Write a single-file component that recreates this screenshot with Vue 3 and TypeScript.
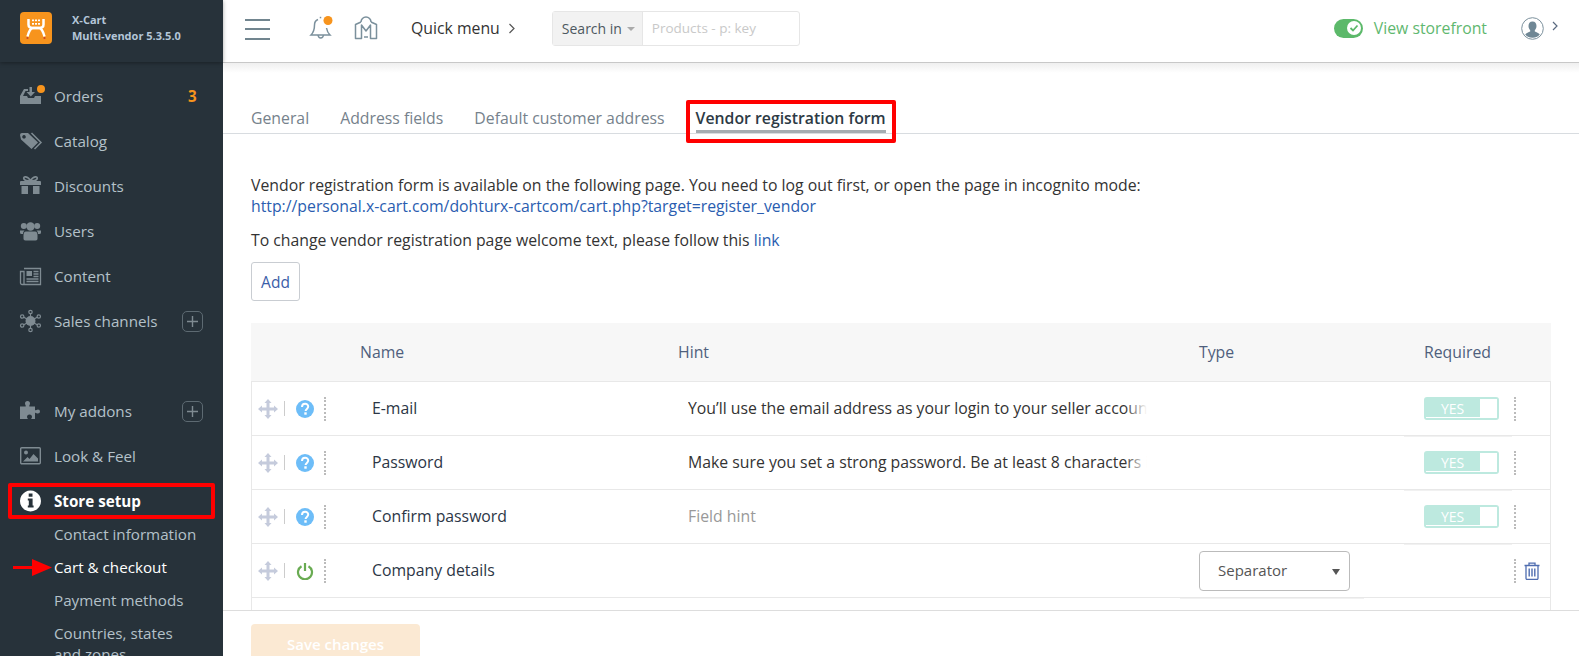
<script setup lang="ts">
interface NavItem {
  label: string
  icon: string
  plus?: boolean
  badge?: string
  gap?: boolean
}

const nav: NavItem[] = [
  { label: 'Orders', icon: 'orders', badge: '3' },
  { label: 'Catalog', icon: 'catalog' },
  { label: 'Discounts', icon: 'gift' },
  { label: 'Users', icon: 'users' },
  { label: 'Content', icon: 'content' },
  { label: 'Sales channels', icon: 'sales', plus: true },
  { label: 'My addons', icon: 'puzzle', plus: true, gap: true },
  { label: 'Look & Feel', icon: 'image' },
]

const subNav = ['Contact information', 'Cart & checkout', 'Payment methods']

interface Row {
  name: string
  hint: string
  placeholder?: boolean
  kind: 'required' | 'separator'
}

const rows: Row[] = [
  { name: 'E-mail', hint: 'You’ll use the email address as your login to your seller account', kind: 'required' },
  { name: 'Password', hint: 'Make sure you set a strong password. Be at least 8 characters in length', kind: 'required' },
  { name: 'Confirm password', hint: 'Field hint', placeholder: true, kind: 'required' },
  { name: 'Company details', hint: '', kind: 'separator' },
]

const tabs = ['General', 'Address fields', 'Default customer address', 'Vendor registration form']
</script>

<template>
  <div class="page">
    <aside class="side">
      <div class="brand">
        <div class="logo">
          <svg width="32" height="32" viewBox="0 0 32 32">
            <g fill="none" stroke="#fff" stroke-width="2.500">
              <path d="M8.500 7v5.500c0 3 2.500 3.500 4.500 3.500h6c2 0 4.500-.5 4.500-3.500V7" />
              <path d="M7.500 24.500c1.500-5.500 3-8.500 5.500-8.500h6c2.500 0 4 3 5.500 8.500" />
            </g>
            <g fill="#fff">
              <rect x="12" y="7.500" width="2" height="1.700" /><rect x="15" y="7.500" width="2" height="1.700" /><rect x="18" y="7.500" width="2" height="1.700" />
              <rect x="12" y="11" width="2" height="1.700" /><rect x="15" y="11" width="2" height="1.700" /><rect x="18" y="11" width="2" height="1.700" />
            </g>
            <circle cx="7.500" cy="26" r="1.100" fill="#c8452a" /><circle cx="24.500" cy="26" r="1.100" fill="#c8452a" />
          </svg>
        </div>
        <div class="brand-text">
          <div>X-Cart</div>
          <div>Multi-vendor 5.3.5.0</div>
        </div>
      </div>

      <nav class="menu">
        <div v-for="item in nav" :key="item.label" class="item" :class="{ gap: item.gap }">
          <svg class="ico" width="22" height="22" viewBox="0 0 22 22" fill="#7f8b92">
            <template v-if="item.icon === 'orders'">
              <path d="M0 19V11L4 4H8V6H5.500L3 11H7L8 13H14L15 11H21V19Z" />
              <path d="M9.500 2h2.500v5h3l-4.200 4.500L6.500 7h3z" />
              <circle cx="21" cy="4" r="4" fill="#f7941d" />
            </template>
            <template v-else-if="item.icon === 'catalog'">
              <path fill-rule="evenodd" d="M0 5a2 2 0 0 1 2-2H8L18 12.500 11.500 19 1 9.500ZM4 5a1.800 1.800 0 1 0 .01 0Z" />
              <path d="M11.500 3 21 12.500 14.500 19" fill="none" stroke="#7f8b92" stroke-width="1.500" />
            </template>
            <template v-else-if="item.icon === 'gift'">
              <path fill-rule="evenodd" d="M1 6h19a1 1 0 0 1 1 1v3H0V7a1 1 0 0 1 1-1ZM1.500 11h6.500v8H1.500ZM13 11h6.500v8H13Z" />
              <rect x="9" y="11" width="3" height="8" fill="#27323a" />
              <path d="M10.500 6C8 .5 2.500 1 4 4c1 2 4 2 6.500 2 2.500 0 5.500 0 6.500-2 1.500-3-4-3.500-6.500 2Z" fill="none" stroke="#7f8b92" stroke-width="1.700" />
            </template>
            <template v-else-if="item.icon === 'users'">
              <circle cx="3.800" cy="6" r="3" /><circle cx="17.200" cy="6" r="3" /><circle cx="10.500" cy="6.500" r="4.200" />
              <path d="M0 10.500h4.500c-1 1-1.500 2-1.500 3.500H1.500A1.500 1.500 0 0 1 0 12.500ZM21 10.500h-4.500c1 1 1.500 2 1.500 3.500h1.500a1.500 1.500 0 0 0 1.500-1.500Z" />
              <path d="M6 11.500h9c2 0 2.500 2 2.500 4v3c0 1-.5 2-2 2h-10c-1.500 0-2-1-2-2v-3c0-2 .5-4 2.500-4Z" />
            </template>
            <template v-else-if="item.icon === 'content'">
              <path d="M4 3.500h16.500v16H2A1.500 1.500 0 0 1 .5 18V6.500H4V19M2.500 19.500" fill="none" stroke="#7f8b92" stroke-width="1.300" />
              <rect x="6.500" y="6" width="5.500" height="5" />
              <path d="M13.500 6.500h5M13.500 9h5M13.500 11.500h5M6.500 14h12M6.500 16.500h12" stroke="#7f8b92" stroke-width="1.300" />
            </template>
            <template v-else-if="item.icon === 'sales'">
              <path d="M10.500 11V2M10.500 11V20M10.500 11 2.500 6.500M10.500 11 18.500 6.500M10.500 11 2.500 15.500M10.500 11 18.500 15.500" stroke="#7f8b92" stroke-width="1.200" />
              <circle cx="10.500" cy="11" r="5" />
              <g fill="#27323a" stroke="#7f8b92" stroke-width="1.200">
                <circle cx="10.500" cy="2" r="1.700" /><circle cx="10.500" cy="20" r="1.700" />
                <circle cx="2.200" cy="6.500" r="1.700" /><circle cx="18.800" cy="6.500" r="1.700" />
                <circle cx="2.200" cy="15.500" r="1.700" /><circle cx="18.800" cy="15.500" r="1.700" />
              </g>
            </template>
            <template v-else-if="item.icon === 'puzzle'">
              <path d="M0 6.500h5.500c1-.5-.5-1.500-.5-3A2.500 2.500 0 0 1 10 3.500c0 1.500-1.500 2.500-.5 3h5.500v3.500c.5 1 1.500-.5 3-.5a2 2 0 0 1 0 4c-1.500 0-2.500-1.500-3-.5V19h-3.500c-1-.5.5-1 .5-2a2.500 2.500 0 0 0-5 0c0 1 1.500 1.500.5 2H0Z" />
            </template>
            <template v-else-if="item.icon === 'image'">
              <rect x=".7" y="2.700" width="19.600" height="16" rx="1" fill="none" stroke="#7f8b92" stroke-width="1.400" />
              <circle cx="6" cy="7.500" r="2" />
              <path d="M3 16.500 7.500 12l2 2 4-5 4.500 4.500v3Z" />
            </template>
          </svg>
          <span class="label">{{ item.label }}</span>
          <span v-if="item.badge" class="badge">{{ item.badge }}</span>
          <span v-if="item.plus" class="plus">
            <svg width="13" height="13" viewBox="0 0 13 13"><path d="M6.500 1v11M1 6.500h11" stroke="#7f8b92" stroke-width="1.400" /></svg>
          </span>
        </div>

        <div class="item active">
          <svg class="ico" width="22" height="22" viewBox="0 0 22 22">
            <path fill="#fff" fill-rule="evenodd" d="M10.500.5a10.500 10.500 0 1 1-.01 0ZM8.700 3.500v3.200h3.800V3.500ZM7.800 8.500v2h1v5h-1v2h5.800v-2h-1v-7Z" />
          </svg>
          <span class="label">Store setup</span>
        </div>

        <div
          v-for="sub in subNav"
          :key="sub"
          class="sub"
          :class="{ current: sub === 'Cart & checkout' }"
        >{{ sub }}</div>
        <div class="sub two">Countries, states<br />and zones</div>
      </nav>

      <div class="mark mark-store"></div>
      <svg class="arrow" width="40" height="18" viewBox="0 0 40 18">
        <path d="M0 7h19V0l20 8.500L19 17v-7H0Z" fill="#f00" />
      </svg>
    </aside>

    <main class="main">
      <header class="top">
        <div class="burger"><i></i><i></i><i></i></div>
        <svg class="bell" width="28" height="28" viewBox="0 0 28 28" fill="none" stroke="#7b909c" stroke-width="1.500">
          <path d="M10 5.500c-2.500 1-3.500 3-3.500 5.500 0 4.500-1 7.500-3.500 10h19c-2-2-3-4-3.500-7" />
          <path d="M10 21c.3 2 1.200 3 2.700 3s2.500-1 2.800-3" />
          <path d="M12.500 2.800v1.500" />
          <circle cx="20" cy="6.500" r="4.500" fill="#f7941d" stroke="none" />
        </svg>
        <svg class="store" width="24" height="24" viewBox="0 0 24 24" fill="none" stroke="#7b909c" stroke-width="1.500">
          <path d="M7 6a5 5 0 0 1 10 0" />
          <path d="M7 6 1.500 8.500V22.500h6V9L12 15l4.500-6v13.500h6V8.500L17 6" stroke-linejoin="round" />
          <path d="M10 21h4" />
        </svg>
        <span class="quick">Quick menu</span>
        <svg class="chev" width="8" height="11" viewBox="0 0 8 11" fill="none" stroke="#555" stroke-width="1.200"><path d="M1.500 1 6 5.500 1.500 10" /></svg>
        <div class="search">
          <div class="search-in">Search in<span class="caret"></span></div>
          <div class="search-box">Products - p: key</div>
        </div>
        <div class="top-right">
          <span class="pill">
            <span class="pill-knob">
              <svg width="10" height="10" viewBox="0 0 10 10" fill="none" stroke="#5cb96a" stroke-width="1.800"><path d="M1.500 5 4 7.500 8.500 2.500" /></svg>
            </span>
          </span>
          <span class="store-link">View storefront</span>
          <svg class="user" width="23" height="23" viewBox="0 0 23 23">
            <circle cx="11.500" cy="11.500" r="10.800" fill="#fff" stroke="#7b909c" stroke-width="1" />
            <path d="M11.500 4.500c2.700 0 4 2 4 4.500 0 2-1 3.500-1.700 4.200v1.300c1.500.8 4 1.500 5 3a9.800 9.800 0 0 1-14.600 0c1-1.500 3.500-2.200 5-3v-1.300C8.500 12.500 7.500 11 7.500 9c0-2.500 1.300-4.500 4-4.500Z" fill="#6f8795" />
          </svg>
          <svg class="user-chev" width="6" height="10" viewBox="0 0 6 10" fill="none" stroke="#5a6a80" stroke-width="1.200"><path d="M1 1l4 4-4 4" /></svg>
        </div>
      </header>
      <div class="shade"></div>

      <section class="content">
        <div class="tabs">
          <span v-for="t in tabs" :key="t" class="tab" :class="{ on: t === 'Vendor registration form' }">{{ t }}</span>
          <div class="mark mark-tab"></div>
        </div>

        <div class="body">
          <p class="lead">
            Vendor registration form is available on the following page. You need to log out first, or open the page in incognito mode:<br />
            <a>http://personal.x-cart.com/dohturx-cartcom/cart.php?target=register_vendor</a>
          </p>
          <p class="lead second">To change vendor registration page welcome text, please follow this <a>link</a></p>
          <button class="add" type="button">Add</button>

          <div class="table">
            <div class="row head">
              <span></span>
              <span>Name</span>
              <span>Hint</span>
              <span>Type</span>
              <span>Required</span>
              <span></span>
            </div>
            <div v-for="row in rows" :key="row.name" class="row">
              <div class="tools">
                <svg width="20" height="20" viewBox="0 0 20 20" fill="#c5cbdc">
                  <path d="M10 0l3.500 4H11.500v4.500H16V6.500l4 3.500-4 3.500v-2h-4.500V16h2L10 20l-3.500-4h2v-4.500H4v2L0 10l4-3.500v2h4.500V4H6.500Z" />
                </svg>
                <i class="bar"></i>
                <svg v-if="row.kind === 'required'" class="state" width="18" height="18" viewBox="0 0 18 18">
                  <circle cx="9" cy="9" r="9" fill="#6dbdf8" />
                  <path d="M6 7c0-4.200 6.200-4.200 6.200-.4 0 2.300-2.600 2.300-2.600 4.400" fill="none" stroke="#fff" stroke-width="2" />
                  <rect x="8.300" y="12.300" width="2.400" height="2.400" fill="#fff" />
                </svg>
                <svg v-else class="state" width="18" height="18" viewBox="0 0 18 18" fill="none" stroke="#69ab52" stroke-width="2.200">
                  <path d="M5.500 4.200a7 7 0 1 0 7 0" />
                  <path d="M9 1v8" />
                </svg>
                <i class="dots"></i>
              </div>
              <div class="name">{{ row.name }}</div>
              <div class="hint" :class="{ ph: row.placeholder }">
                <span class="hint-text">{{ row.hint }}</span>
              </div>
              <div class="type">
                <div v-if="row.kind === 'separator'" class="select">
                  Separator
                  <span class="sel-arrow"></span>
                </div>
              </div>
              <div class="req" :class="{ lined: row.kind === 'required' }">
                <div v-if="row.kind === 'required'" class="switch">
                  <span class="yes">YES</span>
                  <span class="knob"></span>
                </div>
              </div>
              <div class="end">
                <i class="dots"></i>
                <svg v-if="row.kind === 'separator'" class="trash" width="16" height="18" viewBox="0 0 16 18" fill="none" stroke="#4f6db0" stroke-width="1.300">
                  <path d="M.5 3.500h15M5 3.500V1.200h6v2.300" />
                  <path d="M2 3.500v12.800c0 .7.500 1.200 1.200 1.200h9.600c.7 0 1.200-.5 1.200-1.200V3.500" />
                  <path d="M5.200 6.500v8M8 6.500v8M10.800 6.500v8" stroke-width="1.400" />
                </svg>
              </div>
            </div>
            <div class="row blank"></div>
          </div>
        </div>
      </section>

      <footer class="foot">
        <button class="save" type="button">Save changes</button>
      </footer>
    </main>
  </div>
</template>

<style scoped>
.page {
  display: flex;
  height: 656px;
  overflow: hidden;
  font-family: "Open Sans", "Noto Sans", sans-serif;
  font-size: 15.800px;
  color: #333;
  background: #fff;
}

/* sidebar */
.side {
  position: relative;
  flex: 0 0 223px;
  background: #27323a;
  color: #b4c1c9;
  font-size: 15.200px;
}
.brand {
  display: flex;
  align-items: center;
  height: 62px;
  padding: 0 0 6px 20px;
  box-shadow: 0 1px 4px rgba(0, 0, 0, .35);
  box-sizing: border-box;
}
.logo {
  width: 32px;
  height: 32px;
  background: #f7941d;
  border-radius: 4px;
}
.brand-text {
  margin-left: 20px;
  font-size: 11px;
  font-weight: 700;
  line-height: 16px;
  color: #b4c6d8;
}
.menu {
  padding-top: 11.500px;
}
.item {
  display: flex;
  align-items: center;
  height: 45px;
  padding-left: 20px;
  position: relative;
}
.item.gap {
  margin-top: 45px;
}
.item.active {
  margin-bottom: -6px;
}
.ico {
  flex: none;
  overflow: visible;
}
.label {
  margin-left: 12px;
}
.badge {
  position: absolute;
  left: 188px;
  font-weight: 700;
  color: #f7941d;
}
.plus {
  position: absolute;
  left: 182px;
  top: 12px;
  width: 21px;
  height: 21px;
  box-sizing: border-box;
  border: 1px solid #5d6a72;
  border-radius: 5px;
  display: flex;
  align-items: center;
  justify-content: center;
}
.item.active .label {
  color: #fff;
  font-weight: 700;
}
.sub {
  margin-left: 54px;
  height: 33.300px;
  line-height: 33px;
}
.sub.current {
  color: #fff;
}
.sub.two {
  height: auto;
  line-height: 21px;
  padding-top: 6px;
}
.mark {
  position: absolute;
  border: 4px solid #f00;
  border-radius: 2px;
  box-sizing: border-box;
  pointer-events: none;
}
.mark-store {
  left: 8px;
  top: 483px;
  width: 207px;
  height: 36px;
}
.arrow {
  position: absolute;
  left: 13px;
  top: 559px;
}

/* main */
.main {
  flex: 1;
  min-width: 0;
  display: flex;
  flex-direction: column;
}
.top {
  display: flex;
  align-items: center;
  flex: none;
  padding: 0 0 6px 22px;
  border-bottom: 1px solid #c8c8c8;
  box-sizing: content-box;
  height: 56px;
}
.shade {
  height: 10px;
  flex: none;
  background: linear-gradient(#efefef, #fff);
  margin-bottom: -10px;
  position: relative;
}
.burger {
  width: 25px;
  display: flex;
  flex-direction: column;
  gap: 7.500px;
  margin-top: 2px;
}
.burger i {
  height: 2px;
  background: #71858f;
}
.bell {
  margin-left: 38px;
}
.store {
  margin-left: 18px;
}
.quick {
  margin-left: 33px;
  color: #333;
}
.chev {
  margin-left: 8px;
}
.search {
  margin-left: 36px;
  display: flex;
  width: 248px;
  height: 35px;
  border: 1px solid #e6e6e6;
  border-radius: 3px;
  box-sizing: border-box;
  font-size: 13.500px;
}
.search-in {
  flex: 0 0 90px;
  background: #f2f2f2;
  border-right: 1px solid #e6e6e6;
  display: flex;
  align-items: center;
  padding-left: 9px;
  box-sizing: border-box;
  color: #4d5860;
  font-size: 14px;
}
.caret {
  margin-left: 5px;
  margin-top: 2px;
  border: 4px solid transparent;
  border-top-color: #aaa;
  border-bottom: 0;
}
.search-box {
  flex: 1;
  display: flex;
  align-items: center;
  padding-left: 9px;
  color: #c9c9c9;
}
.top-right {
  margin-left: auto;
  display: flex;
  align-items: center;
}
.pill {
  width: 29px;
  height: 19px;
  border-radius: 10px;
  background: #5cb96a;
  position: relative;
}
.pill-knob {
  position: absolute;
  right: 2px;
  top: 2.500px;
  width: 14px;
  height: 14px;
  border-radius: 50%;
  background: #fff;
  display: flex;
  align-items: center;
  justify-content: center;
}
.store-link {
  margin-left: 11px;
  color: #5fb870;
}
.user {
  margin-left: 34px;
}
.user-chev {
  margin-left: 8px;
  margin-right: 21px;
  margin-top: -4px;
}
.content {
  flex: 1;
  min-height: 0;
  overflow: hidden;
}
.tabs {
  position: relative;
  display: flex;
  height: 71px;
  padding-left: 28px;
  box-sizing: border-box;
  border-bottom: 1px solid #d8dce0;
  align-items: flex-end;
}
.tab {
  color: #76828c;
  margin-right: 31px;
  height: 33px;
  line-height: 37px;
  box-sizing: border-box;
  white-space: nowrap;
}
.tab.on {
  color: #2d3a45;
  font-weight: 600;
  border-bottom: 3px solid #a5adb2;
}
.mark-tab {
  left: 463px;
  top: 37px;
  width: 210px;
  height: 43px;
}
.body {
  padding: 41px 28px 0;
}
.lead {
  margin: 0;
  line-height: 21px;
  color: #333;
}
.lead a {
  color: #2a5db0;
}
.second {
  margin-top: 13px;
}
.add {
  display: block;
  margin-top: 11px;
  width: 49px;
  height: 39px;
  background: #fff;
  border: 1px solid #c9cdd2;
  border-radius: 3px;
  font: inherit;
  font-size: 15.500px;
  color: #3c5ea8;
  padding: 0;
}
.table {
  margin-top: 22px;
  border-left: 1px solid #e8e8e8;
  border-right: 1px solid #e8e8e8;
}
.row {
  display: grid;
  grid-template-columns: 108px 318px 521px 225px 90px 1fr;
  align-items: center;
  height: 54px;
  box-sizing: border-box;
  border-bottom: 1px solid #e8e8e8;
}
.row.head {
  height: 59px;
  background: #f7f7f7;
  color: #4f5f7d;
  margin: 0 -1px;
  padding: 0 1px;
}
.row.blank {
  border: 0;
}
.tools {
  display: flex;
  align-items: center;
  padding-left: 6px;
}
.bar {
  width: 1px;
  height: 15px;
  background: #ccc;
  margin-left: 6px;
}
.state {
  margin-left: 11px;
}
.dots {
  display: block;
  width: 0;
  height: 24px;
  border-left: 2px dotted #bbb;
}
.tools .dots {
  margin-left: 10px;
}
.name {
  padding: 0 0 1px 12px;
  color: #2c3646;
}
.hint {
  padding: 0 0 1px 10px;
}
.hint-text {
  display: block;
  position: relative;
  width: 459px;
  overflow: hidden;
  white-space: nowrap;
  color: #333;
}
.hint-text::after {
  content: "";
  position: absolute;
  right: 0;
  top: 0;
  bottom: 0;
  width: 22px;
  background: linear-gradient(to right, rgba(255, 255, 255, 0), #fff);
}
.hint.ph .hint-text {
  color: #999;
}
.type,
.req {
  position: relative;
  height: 100%;
  display: flex;
  align-items: center;
}
.select {
  position: relative;
  width: 151px;
  height: 40px;
  box-sizing: border-box;
  border: 1px solid #bbb;
  border-radius: 4px;
  padding-left: 18px;
  line-height: 36px;
  font-size: 15px;
  color: #555;
}
.type:has(.select)::after,
.req.lined::after {
  content: "";
  position: absolute;
  bottom: -2px;
  height: 1px;
  background: #f1f1f1;
}
.type:has(.select)::after {
  left: -19px;
  width: 184px;
}
.req.lined::after {
  left: -20px;
  width: 108px;
}
.sel-arrow {
  position: absolute;
  right: 9px;
  top: 17px;
  border: 4px solid transparent;
  border-top: 6px solid #555;
  border-bottom: 0;
}
.switch {
  position: relative;
  width: 75px;
  height: 23px;
  box-sizing: border-box;
  border: 2px solid #bde9df;
  border-radius: 3px;
  background: #bde9df;
  color: #fff;
  font-size: 14px;
  line-height: 19px;
}
.switch::after {
  content: "";
  position: absolute;
  left: 0;
  width: 54px;
  bottom: 0;
  height: 1px;
  background: #fff;
}
.yes {
  position: absolute;
  left: 15px;
  top: 0;
}
.knob {
  position: absolute;
  right: 0;
  top: 0;
  bottom: 0;
  width: 17px;
  background: #fff;
}
.end {
  display: flex;
  align-items: center;
}
.trash {
  margin-left: 8px;
}
.foot {
  flex: none;
  height: 46px;
  border-top: 1px solid #ddd;
  background: #fff;
  box-sizing: border-box;
  padding: 13px 0 0 28px;
  overflow: hidden;
  position: relative;
}
.save {
  display: block;
  width: 169px;
  height: 42px;
  background: #fbe9d3;
  border: 0;
  border-radius: 4px;
  color: #fff;
  font: 600 15px "Open Sans", sans-serif;
  padding-bottom: 4px;
}
</style>

<style>
html,
body {
  margin: 0;
  overflow: hidden;
}
</style>
